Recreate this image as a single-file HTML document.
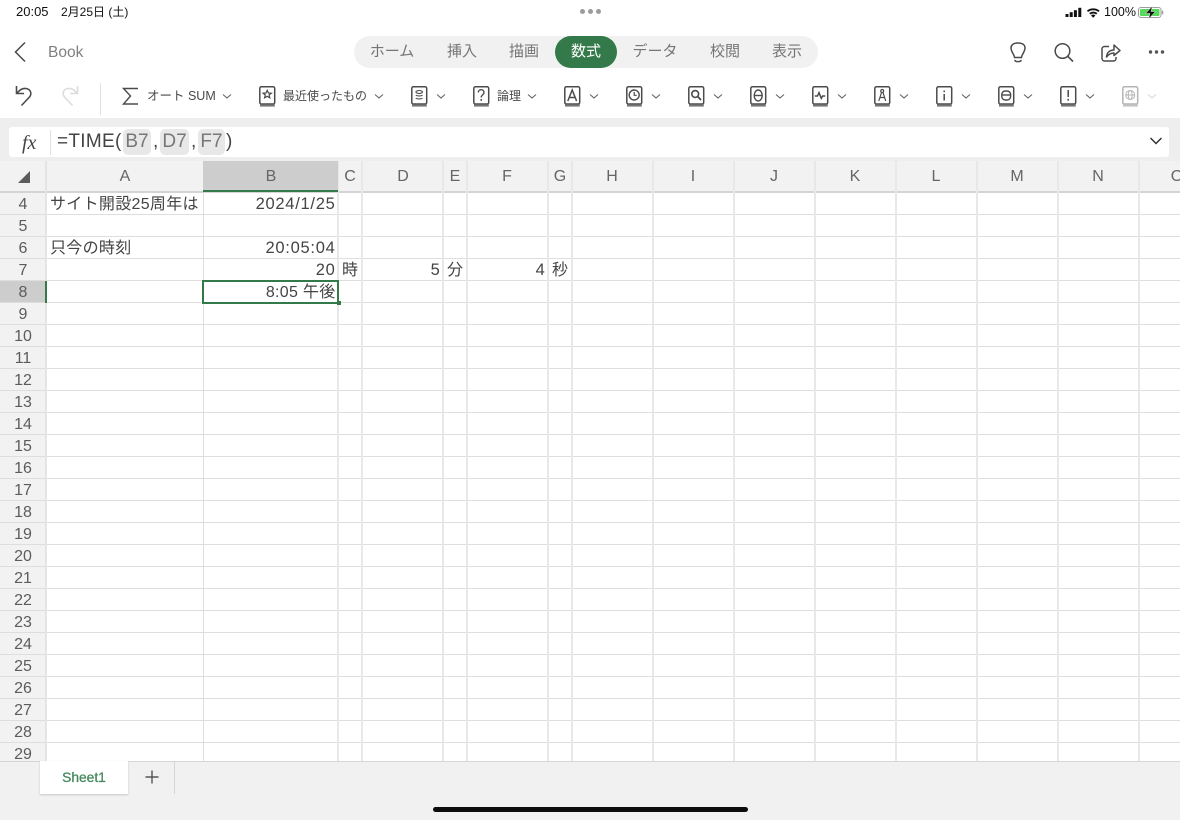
<!DOCTYPE html>
<html lang="ja">
<head>
<meta charset="utf-8">
<title>Book</title>
<style>
html,body{margin:0;padding:0;width:1180px;height:820px;overflow:hidden;background:#fff}
body{position:relative;font-family:"Liberation Sans","Noto Sans CJK JP",sans-serif;color:#444}
.a{position:absolute;white-space:nowrap}
.tab{position:absolute;top:44px;font-size:15px;line-height:16px;color:#757575;transform:translateX(-50%)}
.ch{position:absolute;top:161px;height:30px;line-height:31px;font-size:16px;color:#666;text-align:center;transform:translateX(-50%)}
.rn{position:absolute;left:0;width:46px;text-align:center;font-size:16px;line-height:22px;height:22px;color:#5c5c5c}
.v{position:absolute;width:2px;top:161px;height:601px;background:#e8e8e8}
.c{position:absolute;font-size:16px;line-height:22px;height:22px;color:#444;white-space:nowrap;letter-spacing:.3px}
.r{text-align:right;letter-spacing:.72px;font-size:16.5px}
.ref{position:absolute;top:129px;height:26px;line-height:26px;background:#e8e8e8;border-radius:5px;color:#777;font-size:19px;text-align:center}
.ft{position:absolute;top:131px;font-size:19px;line-height:22px;color:#444;white-space:nowrap}
</style>
</head>
<body>
<!-- status bar -->
<div class="a" style="left:16px;top:4px;font-size:13px;line-height:16px;color:#111">20:05</div>
<div class="a" style="left:61px;top:4px;font-size:12px;line-height:16px;color:#111">2月25日 (土)</div>
<div class="a" style="left:580px;top:9px;width:5px;height:5px;border-radius:50%;background:#9c9c9c"></div>
<div class="a" style="left:588px;top:9px;width:5px;height:5px;border-radius:50%;background:#9c9c9c"></div>
<div class="a" style="left:596px;top:9px;width:5px;height:5px;border-radius:50%;background:#9c9c9c"></div>
<div class="a" style="left:1104px;top:4px;font-size:12.500px;line-height:16px;color:#111">100%</div>
<svg class="a" style="left:1060px;top:0" width="120" height="24" viewBox="0 0 120 24">
<rect x="5.500" y="14" width="3" height="3" fill="#111"/><rect x="9.700" y="12.200" width="3" height="4.800" fill="#111"/><rect x="13.900" y="10.200" width="3" height="6.800" fill="#111"/><rect x="18.300" y="7.800" width="3" height="9.200" fill="#111"/>
<path d="M27.500 11.300a9.500 9.500 0 0 1 11.500 0M29.800 13.800a5.800 5.800 0 0 1 7 0" fill="none" stroke="#111" stroke-width="1.900"/><path d="M31 15.500a3 3 0 0 1 4.400 0L33.200 17.700z" fill="#111"/>
<rect x="78.500" y="7.500" width="22.500" height="10" rx="2.500" fill="none" stroke="#9d9d9d"/>
<rect x="80" y="9" width="19.500" height="7" rx="1" fill="#56d95a"/>
<rect x="101.800" y="10.500" width="1.500" height="4" rx=".7" fill="#a5a5a5"/>
<path d="M92.500 6 85.500 13.500H90L88.500 19 95.500 11.500H91z" fill="#111" stroke="#d8f5d8" stroke-width=".5"/>
</svg>

<!-- title bar -->
<svg class="a" style="left:0;top:30px" width="60" height="44"><path d="M25 12.500 15.500 22 25 31.500" fill="none" stroke="#4a4a4a" stroke-width="1.500"/></svg>
<div class="a" style="left:48px;top:44px;font-size:15.500px;line-height:18px;color:#808080">Book</div>

<div class="a" style="left:354px;top:36px;width:464px;height:32px;border-radius:16px;background:#f1f1f1"></div>
<div class="a" style="left:555px;top:36px;width:62px;height:32px;border-radius:16px;background:#33794a"></div>
<div class="tab" style="left:392px">ホーム</div>
<div class="tab" style="left:462px">挿入</div>
<div class="tab" style="left:524px">描画</div>
<div class="tab" style="left:586px;color:#fff">数式</div>
<div class="tab" style="left:655px">データ</div>
<div class="tab" style="left:725px">校閲</div>
<div class="tab" style="left:787px">表示</div>

<svg class="a" style="left:1000px;top:36px" width="180" height="32" fill="none" stroke="#4a4a4a" stroke-width="1.500">
<path d="M14.500 21.500C14.500 18.500 11 16 11 12 11 8.500 14.200 7 18 7S25 8.500 25 12C25 16 21.500 18.500 21.500 21.500Z"/><path d="M15 24.500C15.500 26 20.500 26 21 24.500" stroke-linecap="round"/>
<circle cx="62.500" cy="15" r="7.300"/><path d="M67.800 20.300 73 25.500" stroke-width="1.600"/>
<path d="M109 10.500h-4.500a2.500 2.500 0 0 0-2.500 2.500v9.500a2.500 2.500 0 0 0 2.500 2.500h9a2.500 2.500 0 0 0 2.500-2.500V21"/>
<path d="M106.500 21c.3-4.500 3.500-7 7.500-7V9l6 5.500-6 5V17c-3.500 0-5.500 1.500-7.500 4z" stroke-linejoin="round"/>
<circle cx="150.500" cy="16" r="1.700" fill="#555" stroke="none"/><circle cx="156.500" cy="16" r="1.700" fill="#555" stroke="none"/><circle cx="162.500" cy="16" r="1.700" fill="#555" stroke="none"/>
</svg>

<!-- ribbon -->
<svg class="a" style="left:0;top:76px" width="1180" height="42" fill="none" stroke="#4b4b4b" stroke-width="1.500">
<path d="M16.500 10v7.500h7.500M17 17c3-3 5-5 9-4.500 5 .7 6 5.500 3.500 8.500l-8 8.500" stroke-width="1.600"/>
<path d="M77.500 10v7.500H70M77 17c-3-3-5-5-9-4.500-5 .7-6 5.500-3.500 8.500l8 8.500" stroke="#dcdcdc" stroke-width="1.600"/>
<path d="M100.500 7v32" stroke="#e2e2e2" stroke-width="1"/>
<path d="M138 12.500h-14.500l7 7.500-7 8H138" stroke-width="1.400"/>
<g stroke-width="1.100" stroke="#666">
<path d="M223 18.500l4 3.500 4-3.500M375 18.500l4 3.500 4-3.500M437 18.500l4 3.500 4-3.500M528 18.500l4 3.500 4-3.500M590 18.500l4 3.500 4-3.500M652 18.500l4 3.500 4-3.500M714 18.500l4 3.500 4-3.500M776 18.500l4 3.500 4-3.500M838 18.500l4 3.500 4-3.500M900 18.500l4 3.500 4-3.500M962 18.500l4 3.500 4-3.500M1024 18.500l4 3.500 4-3.500M1086 18.500l4 3.500 4-3.500"/>
<path d="M1148 18.500l4 3.500 4-3.500" stroke="#d8d8d8"/>
</g>
<!-- book icons -->
<g transform="translate(259,10)"><rect x=".8" y=".8" width="14.900" height="17.200" rx="1.500"/><path d="M1 19.500h14.800" stroke="#777" stroke-width="2.200"/><path d="M8.200 4.300l1.200 2.700 2.900.2-2.200 1.800.7 2.800-2.600-1.500-2.600 1.500.7-2.800-2.200-1.800 2.900-.2z" stroke-width="1.200"/></g>
<g transform="translate(411,10)"><rect x=".8" y=".8" width="14.900" height="17.200" rx="1.500"/><path d="M1 19.500h14.800" stroke="#777" stroke-width="2.200"/><ellipse cx="8.200" cy="6" rx="3.300" ry="1.500" stroke-width="1.100"/><path d="M4.900 9c.8 1.300 5.800 1.300 6.600 0M4.900 12c.8 1.300 5.800 1.300 6.600 0" stroke-width="1.100"/></g>
<g transform="translate(473,10)"><rect x=".8" y=".8" width="14.900" height="17.200" rx="1.500"/><path d="M1 19.500h14.800" stroke="#777" stroke-width="2.200"/><path d="M5.300 6.500C5.300 2.800 11 2.800 11 6.500c0 2.300-2.800 2.300-2.800 5" stroke-width="1.400"/><path d="M8.200 13v1.800" stroke-width="1.500"/></g>
<g transform="translate(564,10)"><rect x=".8" y=".8" width="14.900" height="17.200" rx="1.500"/><path d="M1 19.500h14.800" stroke="#777" stroke-width="2.200"/><path d="M3.800 15 8.200 4l4.400 11M5.300 11.500h5.800" stroke-width="1.500"/></g>
<g transform="translate(626,10)"><rect x=".8" y=".8" width="14.900" height="17.200" rx="1.500"/><path d="M1 19.500h14.800" stroke="#777" stroke-width="2.200"/><circle cx="8.200" cy="9" r="5" stroke-width="1.400"/><path d="M8.200 6v3.300h2.500" stroke-width="1.200"/></g>
<g transform="translate(688,10)"><rect x=".8" y=".8" width="14.900" height="17.200" rx="1.500"/><path d="M1 19.500h14.800" stroke="#777" stroke-width="2.200"/><circle cx="7.200" cy="8" r="3.400" stroke-width="1.600"/><path d="M9.700 10.500 13 14" stroke-width="1.800"/></g>
<g transform="translate(750,10)"><rect x=".8" y=".8" width="14.900" height="17.200" rx="1.500"/><path d="M1 19.500h14.800" stroke="#777" stroke-width="2.200"/><ellipse cx="8.200" cy="9.500" rx="4" ry="5.500" stroke-width="1.400"/><path d="M4.200 9.500h8" stroke-width="1.400"/></g>
<g transform="translate(812,10)"><rect x=".8" y=".8" width="14.900" height="17.200" rx="1.500"/><path d="M1 19.500h14.800" stroke="#777" stroke-width="2.200"/><path d="M2.800 10h2.700l1.500-3.300 2.300 5.600 1.400-2.300h2.500" stroke-width="1.500"/></g>
<g transform="translate(874,10)"><rect x=".8" y=".8" width="14.900" height="17.200" rx="1.500"/><path d="M1 19.500h14.800" stroke="#777" stroke-width="2.200"/><circle cx="8.200" cy="5" r="1.500" stroke-width="1.200"/><path d="M7.500 6.500 4.800 15M9 6.500 11.700 15M5.500 11.500h5.500" stroke-width="1.200"/></g>
<g transform="translate(936,10)"><rect x=".8" y=".8" width="14.900" height="17.200" rx="1.500"/><path d="M1 19.500h14.800" stroke="#777" stroke-width="2.200"/><path d="M8.200 4.500v1.800M8.200 8v6.500" stroke-width="1.500"/></g>
<g transform="translate(998,10)"><rect x=".8" y=".8" width="14.900" height="17.200" rx="1.500"/><path d="M1 19.500h14.800" stroke="#777" stroke-width="2.200"/><rect x="3.800" y="5" width="8.800" height="9" rx="3.500" stroke-width="1.400"/><path d="M3.800 9h8.800" stroke-width="1.400"/></g>
<g transform="translate(1060,10)"><rect x=".8" y=".8" width="14.900" height="17.200" rx="1.500"/><path d="M1 19.500h14.800" stroke="#777" stroke-width="2.200"/><path d="M8.200 4v7M8.200 12.800v1.800" stroke-width="1.500"/></g>
<g transform="translate(1122,10)" stroke="#b4b4b4"><rect x=".8" y=".8" width="14.900" height="17.200" rx="1.500"/><path d="M1 19.500h14.800" stroke="#c4c4c4" stroke-width="2.200"/><circle cx="8.200" cy="9" r="4.500" stroke-width="1"/><ellipse cx="8.200" cy="9" rx="2" ry="4.500" stroke-width="1"/><path d="M3.700 9h9" stroke-width="1"/></g>
</svg>
<div class="a" style="left:147px;top:88px;font-size:12.500px;line-height:16px;color:#4a4a4a">オート SUM</div>
<div class="a" style="left:283px;top:88px;font-size:12px;line-height:16px;color:#4a4a4a">最近使ったもの</div>
<div class="a" style="left:497px;top:88px;font-size:12px;line-height:16px;color:#4a4a4a">論理</div>

<!-- formula bar -->
<div class="a" style="left:0;top:118px;width:1180px;height:43px;background:#eeeeee"></div>
<div class="a" style="left:9px;top:127px;width:1160px;height:30px;background:#fff;border-radius:3px"></div>
<div class="a" style="left:50px;top:130px;width:1px;height:25px;background:#e0e0e0"></div>
<div class="a" style="left:22px;top:130px;font-family:'Liberation Serif',serif;font-style:italic;font-size:20px;line-height:26px;color:#444">fx</div>
<div class="ft" style="left:57px;letter-spacing:.3px">=TIME(</div>
<div class="ref" style="left:123px;width:28px">B7</div>
<div class="ft" style="left:153px">,</div>
<div class="ref" style="left:160px;width:29px">D7</div>
<div class="ft" style="left:191px">,</div>
<div class="ref" style="left:198px;width:27px">F7</div>
<div class="ft" style="left:226px">)</div>
<svg class="a" style="left:1148px;top:134px" width="16" height="14"><path d="M2.500 4 8 9.500 13.500 4" fill="none" stroke="#333" stroke-width="1.500"/></svg>

<!-- header row -->
<div class="a" style="left:0;top:161px;width:1180px;height:30px;background:#f2f2f2"></div>
<div class="a" style="left:0;top:191px;width:1180px;height:2px;background:#d4d4d4"></div>

<!-- row header -->
<div class="a" style="left:0;top:193px;width:45px;height:569px;background:#f2f2f2"></div>
<div class="a" style="left:0;top:281px;width:45px;height:21px;background:#cdcdcd"></div>
<svg class="a" style="left:17px;top:170px" width="14" height="14"><path d="M13 1V13H1Z" fill="#5c5c5c"/></svg>

<!-- row lines -->
<div class="a" style="left:0;top:193px;width:1180px;height:569px;background-image:linear-gradient(to bottom,transparent 21px,#dedede 21px);background-size:100% 22px;background-repeat:repeat-y"></div>

<!-- column lines -->
<div class="v" style="left:45px;background:#e4e4e4"></div>
<div class="v" style="left:203px;top:193px;height:569px;width:1px;background:#dedede"></div>
<div class="v" style="left:337px"></div>
<div class="v" style="left:361px"></div>
<div class="v" style="left:442px"></div>
<div class="v" style="left:466px"></div>
<div class="v" style="left:547px"></div>
<div class="v" style="left:571px"></div>
<div class="v" style="left:652px"></div>
<div class="v" style="left:733px"></div>
<div class="v" style="left:814px"></div>
<div class="v" style="left:895px"></div>
<div class="v" style="left:976px"></div>
<div class="v" style="left:1057px"></div>
<div class="v" style="left:1138px"></div>

<!-- selected column header sits above the column lines -->
<div class="a" style="left:203px;top:161px;width:135px;height:29px;background:#cdcdcd"></div>
<div class="a" style="left:203px;top:190px;width:135px;height:2px;background:#33794a"></div>

<!-- column labels -->
<div class="ch" style="left:125px">A</div>
<div class="ch" style="left:271px">B</div>
<div class="ch" style="left:350px">C</div>
<div class="ch" style="left:403px">D</div>
<div class="ch" style="left:455px">E</div>
<div class="ch" style="left:507px">F</div>
<div class="ch" style="left:560px">G</div>
<div class="ch" style="left:612px">H</div>
<div class="ch" style="left:693px">I</div>
<div class="ch" style="left:774px">J</div>
<div class="ch" style="left:855px">K</div>
<div class="ch" style="left:936px">L</div>
<div class="ch" style="left:1017px">M</div>
<div class="ch" style="left:1098px">N</div>
<div class="ch" style="left:1177px">O</div>

<!-- row numbers -->
<div class="rn" style="top:194px">4</div>
<div class="rn" style="top:216px">5</div>
<div class="rn" style="top:238px">6</div>
<div class="rn" style="top:260px">7</div>
<div class="rn" style="top:282px">8</div>
<div class="rn" style="top:304px">9</div>
<div class="rn" style="top:326px">10</div>
<div class="rn" style="top:348px">11</div>
<div class="rn" style="top:370px">12</div>
<div class="rn" style="top:392px">13</div>
<div class="rn" style="top:414px">14</div>
<div class="rn" style="top:436px">15</div>
<div class="rn" style="top:458px">16</div>
<div class="rn" style="top:480px">17</div>
<div class="rn" style="top:502px">18</div>
<div class="rn" style="top:524px">19</div>
<div class="rn" style="top:546px">20</div>
<div class="rn" style="top:568px">21</div>
<div class="rn" style="top:590px">22</div>
<div class="rn" style="top:612px">23</div>
<div class="rn" style="top:634px">24</div>
<div class="rn" style="top:656px">25</div>
<div class="rn" style="top:678px">26</div>
<div class="rn" style="top:700px">27</div>
<div class="rn" style="top:722px">28</div>
<div class="rn" style="top:744px;height:18px;overflow:hidden">29</div>

<!-- cells -->
<div class="c" style="left:50px;top:194px">サイト開設25周年は</div>
<div class="c r" style="left:203px;width:132.500px;top:193px">2024/1/25</div>
<div class="c" style="left:50px;top:238px">只今の時刻</div>
<div class="c r" style="left:203px;width:132.500px;top:237px">20:05:04</div>
<div class="c r" style="left:203px;width:132.500px;top:259px">20</div>
<div class="c" style="left:342px;top:260px">時</div>
<div class="c r" style="left:362px;width:78.500px;top:259px">5</div>
<div class="c" style="left:447px;top:260px">分</div>
<div class="c r" style="left:467px;width:78.500px;top:259px">4</div>
<div class="c" style="left:552px;top:260px">秒</div>
<div class="c r" style="left:203px;width:132.500px;top:282px;font-size:16px;letter-spacing:.3px">8:05 午後</div>

<!-- selection -->
<div class="a" style="left:44.500px;top:281px;width:2px;height:22px;background:#33794a"></div>
<div class="a" style="left:202px;top:279.500px;width:133px;height:20px;border:2px solid #33794a"></div>
<div class="a" style="left:336.500px;top:301px;width:4px;height:4px;background:#33794a"></div>

<!-- sheet tabs -->
<div class="a" style="left:0;top:761px;width:1180px;height:59px;background:#f1f1f1;border-top:1px solid #d6d6d6;box-sizing:border-box"></div>
<div class="a" style="left:40px;top:761px;width:88px;height:33px;background:#fff;box-shadow:0 1px 2px rgba(0,0,0,.18);text-align:center;font-size:13.800px;line-height:33px;-webkit-text-stroke:.3px #47885e;color:#47885e">Sheet1</div>
<svg class="a" style="left:144px;top:769px" width="16" height="16"><path d="M8 1.500v13M1.500 8h13" stroke="#555" stroke-width="1.400" fill="none"/></svg>
<div class="a" style="left:174px;top:762px;width:1px;height:32px;background:#d6d6d6"></div>
<div class="a" style="left:433px;top:807px;width:315px;height:5px;border-radius:3px;background:#0c0c0c"></div>
</body>
</html>
